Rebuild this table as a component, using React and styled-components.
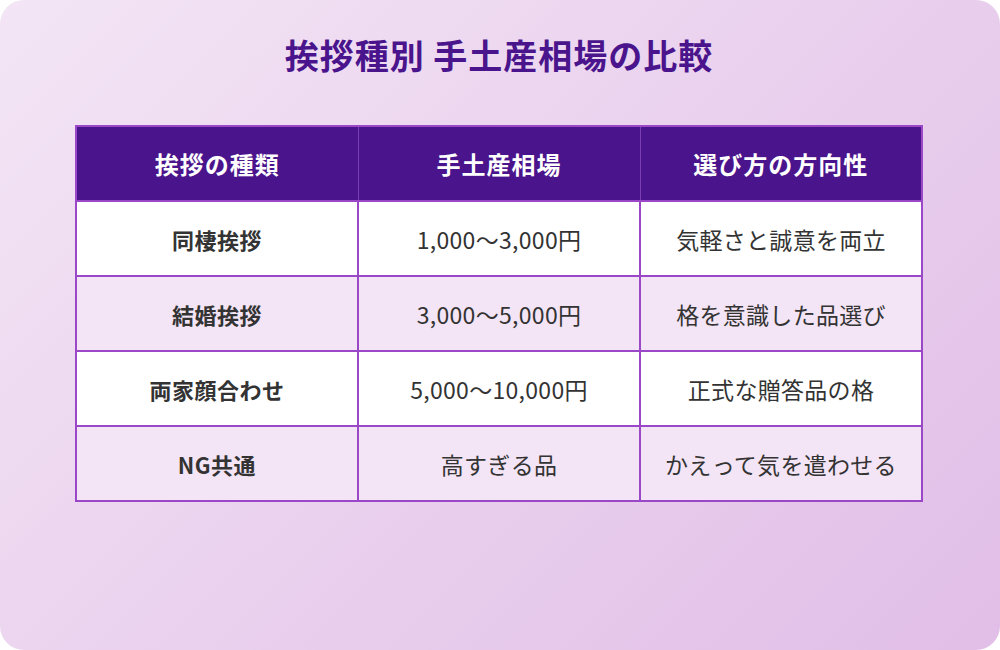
import React from "react";
import styled, { createGlobalStyle } from "styled-components";

const Global = createGlobalStyle`
  html, body { margin: 0; padding: 0; background: #ffffff; }
  body { font-family: "Noto Sans CJK JP", "Noto Sans", sans-serif; }
`;

const Card = styled.div`
  width: 1000px;
  height: 650px;
  box-sizing: border-box;
  border-radius: 24px;
  background: linear-gradient(135deg, #f3e5f5 0%, #e1bee7 100%);
  padding-top: 34px;
  padding-right: 2px;
  display: flex;
  flex-direction: column;
  align-items: center;
  overflow: hidden;
`;

const Title = styled.h1`
  margin: 0 0 49px;
  font-size: 34px;
  line-height: 42px;
  font-weight: 700;
  color: #4a148c;
  letter-spacing: 1px;
  text-align: center;
`;

const Table = styled.table`
  width: 848px;
  border-collapse: collapse;
  table-layout: fixed;
  border: 2px solid #9a48c8;
`;

const HeadCell = styled.th`
  height: 73px;
  padding: 0;
  background: #4a148c;
  color: #ffffff;
  font-size: 24px;
  font-weight: 700;
  letter-spacing: 1px;
  text-align: center;
  border-right: 1px solid #7b3fb0;
  border-bottom: 2px solid #9a48c8;
  &:last-child { border-right: none; }
`;

const Row = styled.tr`
  background: ${(p) => (p.$alt ? "#f3e5f5" : "#ffffff")};
`;

const Cell = styled.td`
  height: 75px;
  padding: 0;
  box-sizing: border-box;
  border: 2px solid #9a48c8;
  color: #333333;
  font-size: ${(p) => (p.$bold ? "22px" : "23px")};
  font-weight: ${(p) => (p.$bold ? 700 : 400)};
  letter-spacing: ${(p) => (p.$bold ? "0.5px" : "0.3px")};
  text-align: center;
  vertical-align: middle;
`;

const rows = [
  ["同棲挨拶", "1,000〜3,000円", "気軽さと誠意を両立"],
  ["結婚挨拶", "3,000〜5,000円", "格を意識した品選び"],
  ["両家顔合わせ", "5,000〜10,000円", "正式な贈答品の格"],
  ["NG共通", "高すぎる品", "かえって気を遣わせる"],
];

export default function App() {
  return (
    <>
      <Global />
      <Card>
        <Title>挨拶種別 手土産相場の比較</Title>
        <Table>
          <thead>
            <tr>
              <HeadCell>挨拶の種類</HeadCell>
              <HeadCell>手土産相場</HeadCell>
              <HeadCell>選び方の方向性</HeadCell>
            </tr>
          </thead>
          <tbody>
            {rows.map((r, i) => (
              <Row key={r[0]} $alt={i % 2 === 1}>
                <Cell $bold>{r[0]}</Cell>
                <Cell>{r[1]}</Cell>
                <Cell>{r[2]}</Cell>
              </Row>
            ))}
          </tbody>
        </Table>
      </Card>
    </>
  );
}
